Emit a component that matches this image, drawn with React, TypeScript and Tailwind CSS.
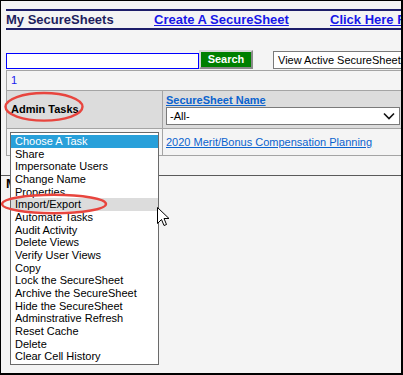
import React from "react";

const tasks = [
  "Choose A Task",
  "Share",
  "Impersonate Users",
  "Change Name",
  "Properties",
  "Import/Export",
  "Automate Tasks",
  "Audit Activity",
  "Delete Views",
  "Verify User Views",
  "Copy",
  "Lock the SecureSheet",
  "Archive the SecureSheet",
  "Hide the SecureSheet",
  "Adminstrative Refresh",
  "Reset Cache",
  "Delete",
  "Clear Cell History",
];

const TaskList: React.FC = () => (
  <div className="absolute left-[9px] top-[131px] w-[149px] border border-[#6a6a6a] bg-white pt-[2px] pb-px">
    {tasks.map((t, i) => (
      <div
        key={t}
        className={
          "h-[12.66px] whitespace-nowrap pl-[4px] text-[11px] leading-[12.66px] " +
          (i === 0 ? "bg-[#28a0da] text-white" : i === 5 ? "bg-[#dcdcdc] text-black" : "text-black")
        }
      >
        {t}
      </div>
    ))}
  </div>
);

const Marks: React.FC = () => (
  <svg
    className="pointer-events-none absolute -left-px -top-px"
    width="403"
    height="375"
    viewBox="0 0 403 375"
  >
    <ellipse cx="44" cy="106.8" rx="38.5" ry="13.8" fill="none" stroke="#e8453e" strokeWidth="2.4" />
    <ellipse cx="54" cy="204" rx="52" ry="9.2" fill="none" stroke="#e8453e" strokeWidth="2.4" />
    <path
      d="M157.5 207.5 L157.5 223.5 L161.5 219.5 L164 225.5 L166.5 224.5 L164 218.5 L169 218.5 Z"
      fill="#fff"
      stroke="#000"
      strokeWidth="1"
      strokeLinejoin="miter"
    />
  </svg>
);

export default function App() {
  return (
    <div
      className="relative h-[375px] w-[403px] overflow-hidden border-t border-l border-r-2 border-b-2 border-black bg-[#f4f4f4] text-black"
      style={{ fontFamily: '"Liberation Sans", Arial, sans-serif' }}
    >
      {/* header bar */}
      <div className="ml-[5px] mt-[8px] flex h-[21px] items-center whitespace-nowrap border-y-2 border-[#1e1e6a] text-[13px] font-bold leading-[17px]">
        <span className="w-[148px] shrink-0 text-[#1e1e5e]">My SecureSheets</span>
        <a className="w-[176px] shrink-0 text-[#1717e8] underline">Create A SecureSheet</a>
        <a className="shrink-0 text-[#1717e8] underline">Click Here For Help</a>
      </div>

      {/* search row */}
      <div className="ml-[5px] mt-[20px] flex items-start">
        <input className="mt-[3px] h-[16px] w-[193px] shrink-0 border border-[#0000ff] bg-white outline-none" />
        <button className="flex h-[19px] w-[54px] shrink-0 items-center justify-center border-2 border-t-[#d8d8d8] border-l-[#d8d8d8] border-r-[#8a8a8a] border-b-[#8a8a8a] bg-[#008000] text-[11px] font-bold leading-none text-white">
          Search
        </button>
        <div className="ml-[20px] mt-px flex h-[18px] w-[160px] shrink-0 items-center whitespace-nowrap border border-[#7a7a7a] bg-white pl-[4px] text-[11px]">
          View Active SecureSheets
        </div>
      </div>

      {/* grid */}
      <div className="ml-[5px] mt-px w-[396px] border border-[#a4a4a4]">
        <div className="flex h-[20px] items-center border-b border-[#a4a4a4] pl-[4px] text-[11px] text-[#1a1aee]">
          1
        </div>
        <div className="flex border-b border-[#a4a4a4] bg-[#dcdcdc]">
          <div className="flex w-[156px] shrink-0 items-center border-r border-[#a4a4a4] pl-[4px] text-[11px] font-bold">
            Admin Tasks
          </div>
          <div className="flex flex-col pl-[3px] pt-[3px] pb-[3px]">
            <a className="text-[11px] font-bold leading-[13px] text-[#0b63ce] underline">SecureSheet Name</a>
            <div className="flex h-[18px] w-[234px] items-center justify-between border border-[#7a7a7a] bg-white pl-[3px] pr-[4px] text-[11px]">
              <span>-All-</span>
              <svg width="12" height="8" viewBox="0 0 12 8">
                <path d="M1 1.5 L6 6.5 L11 1.5" fill="none" stroke="#111" strokeWidth="1.6" />
              </svg>
            </div>
          </div>
        </div>
        <div className="flex h-[26px]">
          <div className="w-[156px] shrink-0 border-r border-[#a4a4a4]" />
          <div className="flex items-center pl-[3px]">
            <a className="whitespace-nowrap text-[11px] text-[#0b63ce] underline">
              2020 Merit/Bonus Compensation Planning
            </a>
          </div>
        </div>
      </div>
      <div className="h-[20px] border-b border-[#5a5a5a]" />
      <div className="ml-[5px] whitespace-nowrap text-[13px] font-bold leading-[16px]">My Tasks</div>

      <TaskList />
      <Marks />
    </div>
  );
}
